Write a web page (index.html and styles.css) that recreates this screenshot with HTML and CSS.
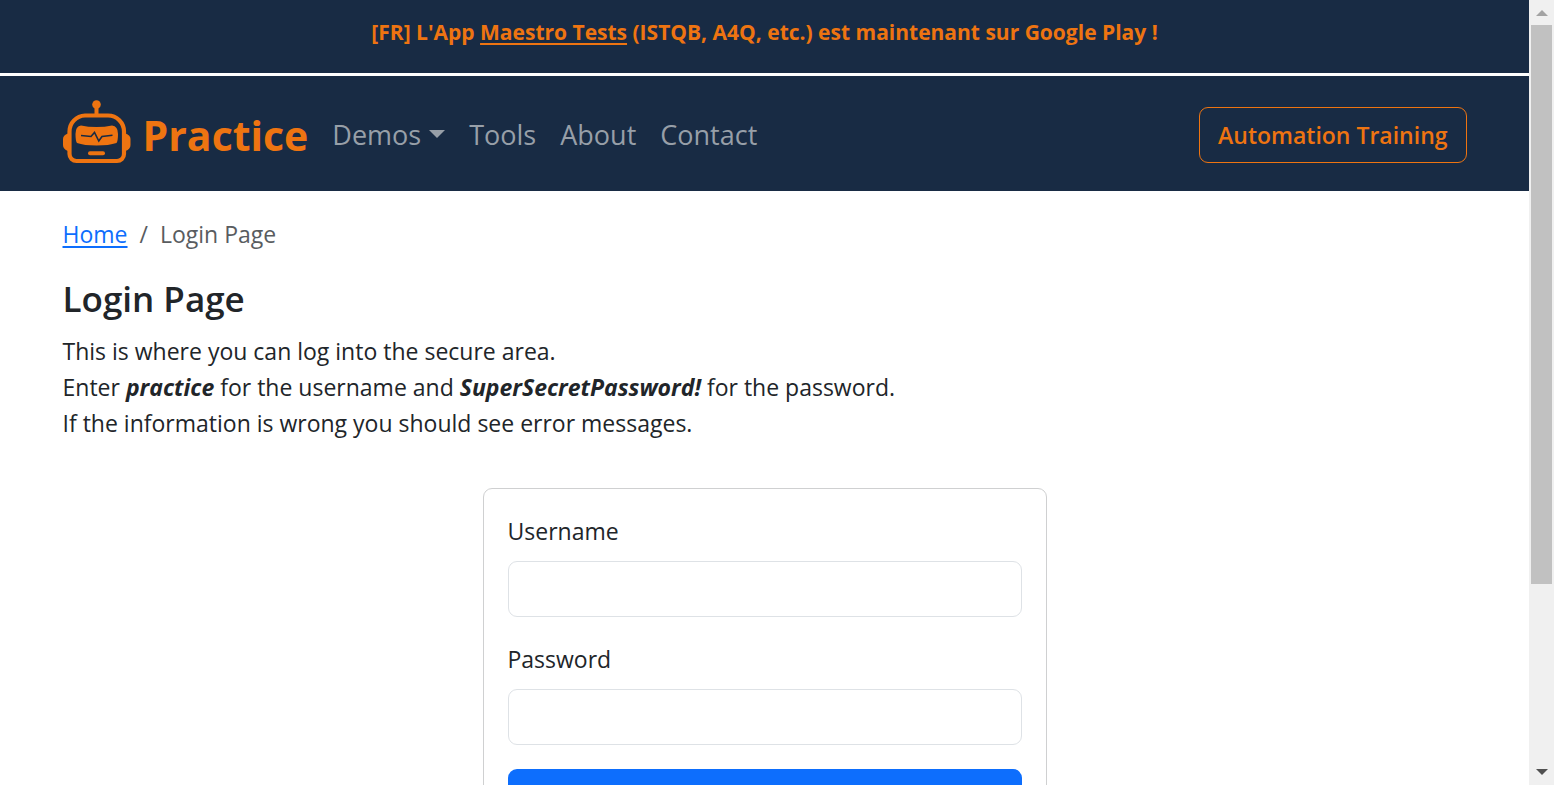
FILE: index.html
```html
<!DOCTYPE html>
<html lang="en">
<head>
<meta charset="utf-8">
<title>Login Page</title>
<link rel="stylesheet" href="styles.css">
</head>
<body>
<div class="shell">
  <div class="page">
    <p class="banner">[FR] L'App <a href="#">Maestro Tests</a> (ISTQB, A4Q, etc.) est maintenant sur Google Play !</p>
    <header class="navbar">
      <nav class="container nav-inner">
        <a class="brand" href="#">
          <svg class="logo" viewBox="3 3 68 65" fill="none" aria-hidden="true">
            <circle cx="36.5" cy="7.5" r="4.3" fill="currentColor"/>
            <path d="M36.5 10V18" stroke="currentColor" stroke-width="4"/>
            <path d="M25 18.5H48A16 16 0 0 1 64 34.500V57A7 7 0 0 1 57 64H16.500A7 7 0 0 1 9.500 57V34.500A16 16 0 0 1 25 18.500Z" stroke="currentColor" stroke-width="4.2"/>
            <path d="M8 36.500Q3 38 3 42V48Q3 52 8 54ZM65.500 36.500Q70.500 38 70.500 42V48Q70.500 52 65.500 54Z" fill="currentColor"/>
            <path d="M21 28.500Q28 30 36.500 30Q45 30 52 28.500Q58 29 58 37Q58 44 56.500 46Q49 48.500 36.500 48.500Q24 48.500 17 46Q15.500 44 15.500 37Q15.500 29 21 28.500Z" fill="currentColor"/>
            <path d="M21 38.500L31 39.500L34.500 35.500L38.800 44L42 39.500L52.500 38.300" stroke="#182b44" stroke-width="1.600"/>
            <path d="M30 56.300H43" stroke="currentColor" stroke-width="4" stroke-linecap="round"/>
          </svg>
          <span>Practice</span>
        </a>
        <ul class="links">
          <li><a class="dropdown" href="#">Demos</a></li>
          <li><a href="#">Tools</a></li>
          <li><a href="#">About</a></li>
          <li><a href="#">Contact</a></li>
        </ul>
        <a class="training" href="#">Automation Training</a>
      </nav>
    </header>
    <main class="container content">
      <nav aria-label="Breadcrumb">
        <ol class="breadcrumb">
          <li><a href="#">Home</a></li>
          <li class="separator" aria-hidden="true">/</li>
          <li aria-current="page">Login Page</li>
        </ol>
      </nav>
      <h1>Login Page</h1>
      <p class="intro">This is where you can log into the secure area.<br>Enter <b><i>practice</i></b> for the username and <b><i>SuperSecretPassword!</i></b> for the password.<br>If the information is wrong you should see error messages.</p>
      <form class="card">
        <label for="username">Username</label>
        <input id="username" name="username" type="text">
        <label for="password">Password</label>
        <input id="password" name="password" type="password">
        <button type="submit">Login</button>
      </form>
    </main>
  </div>
  <div class="scrollbar" aria-hidden="true">
    <svg class="arrow up" viewBox="0 0 12 6"><path d="M0 6L6 0L12 6Z"/></svg>
    <div class="track"><div class="thumb"></div></div>
    <svg class="arrow down" viewBox="0 0 12 6"><path d="M0 0L6 6L12 0Z"/></svg>
  </div>
</div>
</body>
</html>
```
FILE: styles.css
```css
* { box-sizing: border-box; }
body {
  margin: 0;
  background: #fff;
  color: #212529;
  font: 23px/36px "Open Sans", "Noto Sans", sans-serif;
}
.shell {
  display: grid;
  grid-template-columns: 1fr 25px;
  height: 100vh;
  overflow: hidden;
}
.page { overflow: hidden; }
.container {
  max-width: 1440px;
  margin: 0 auto;
  padding: 0 18px;
}
.banner {
  margin: 0;
  padding: 14px 18px 23px;
  border-bottom: 3px solid #fff;
  background: #182b44;
  color: #ee7411;
  font-size: 21px;
  font-weight: 700;
  text-align: center;
}
.banner a {
  color: inherit;
  text-decoration-thickness: 2px;
  text-underline-offset: 3px;
}
.navbar {
  padding: 24px 0 21px;
  background: #182b44;
}
.nav-inner {
  display: flex;
  align-items: center;
}
.brand {
  display: flex;
  align-items: flex-start;
  gap: 12px;
  color: #ee7411;
  font-size: 41px;
  font-weight: 700;
  line-height: 70px;
  text-decoration: none;
}
.logo { width: 68px; height: 65px; }
.links {
  display: flex;
  gap: 24px;
  margin: 0 0 0 24px;
  padding: 0;
  list-style: none;
  font-size: 27px;
}
.links a {
  color: #979fa8;
  text-decoration: none;
}
.dropdown::after {
  content: "";
  display: inline-block;
  margin-left: 8px;
  vertical-align: 7px;
  border: 8px solid transparent;
  border-top-color: currentColor;
  border-bottom: 0;
}
.training {
  margin-left: auto;
  padding: 9px 18px;
  border: 1px solid #ee7411;
  border-radius: 9px;
  color: #ee7411;
  font-weight: 600;
  text-decoration: none;
}
.content { padding-top: 25px; }
.breadcrumb {
  display: flex;
  gap: 12px;
  margin: 0 0 24px;
  padding: 0;
  list-style: none;
  color: #595c5f;
}
.breadcrumb a {
  color: #0d6efd;
  text-decoration-thickness: 2px;
  text-underline-offset: 3px;
}
h1 {
  margin: 0 0 12px;
  font-size: 35px;
  font-weight: 600;
  line-height: 45px;
}
.intro { margin: 0 0 47px; }
.card {
  display: flex;
  flex-direction: column;
  max-width: 564px;
  margin: 0 auto;
  padding: 24px;
  border: 1px solid #cfd0d1;
  border-radius: 9px;
}
label { margin-bottom: 12px; }
input {
  width: 100%;
  height: 56px;
  margin: 0 0 24px;
  padding: 9px 18px;
  border: 1px solid #dee2e6;
  border-radius: 9px;
  background: #fff;
  color: inherit;
  font: inherit;
}
button {
  padding: 16px 18px;
  border: 0;
  border-radius: 9px;
  background: #0d6efd;
  color: #fff;
  font: inherit;
}
.scrollbar {
  display: flex;
  flex-direction: column;
  align-items: center;
  gap: 9px;
  padding: 10px 2px;
  background: #f0f0f0;
}
.arrow { width: 12px; height: 6px; flex: none; }
.up { fill: #a3a3a3; }
.down { fill: #505050; }
.track { flex: 1; width: 100%; }
.thumb { height: 76%; background: #c1c1c1; }
```
